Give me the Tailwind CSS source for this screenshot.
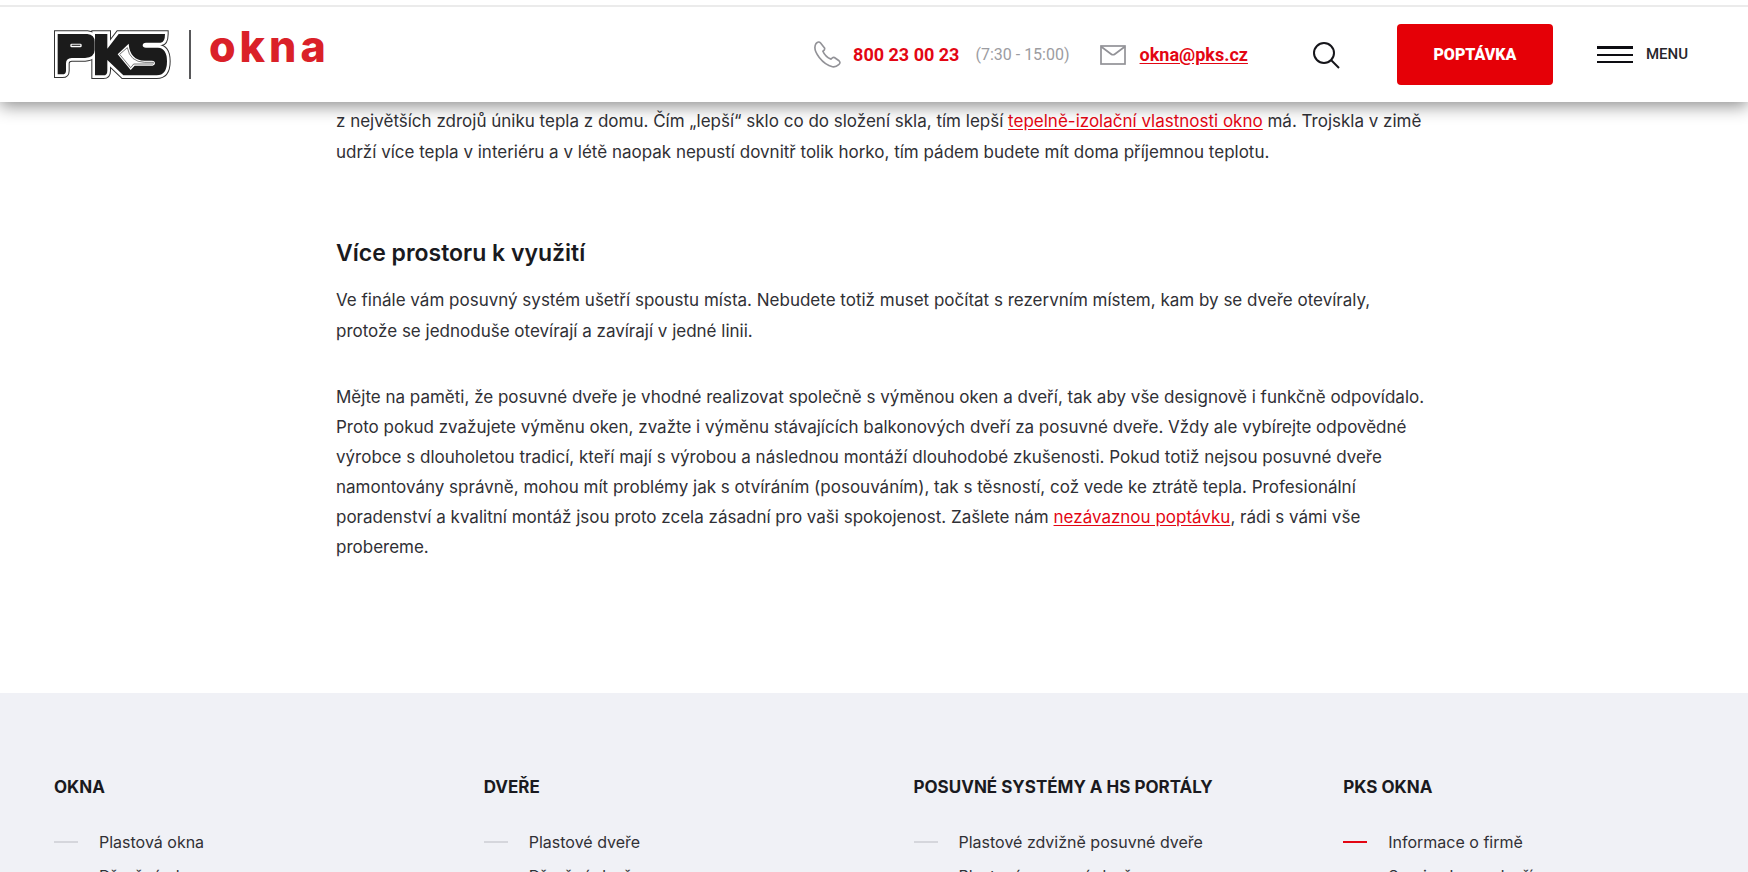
<!DOCTYPE html>
<html lang="cs">
<head>
    <meta charset="UTF-8">
    <meta name="viewport" content="width=device-width, initial-scale=1.0">
    <title>PKS okna</title>
    <script src="https://cdn.jsdelivr.net/npm/@tailwindcss/browser@4"></script>
</head>
<body class="font-['Roboto',sans-serif] bg-white text-[#303035]">
<header class="sticky top-0 z-10 bg-white pt-[5px] shadow-[0_4px_16px_rgba(0,0,0,0.45)]">
    <div class="h-[97px] border-t-2 border-[#ebebeb] flex items-center justify-between pl-[54px] pr-[60px]">
        <!-- Logo -->
        <a href="#" class="flex items-center">
            <svg class="w-[118px] h-[50px]" viewBox="72 90 354 150" role="img" aria-label="PKS">
                <defs>
                    <g id="pks">
                        <path d="M83 102H172Q194 104 194 125V150Q194 172 165 174H125Q108 175 108 190V212Q108 223 97 223H83Z"/>
                        <path d="M195 102H232V146L266 102H405Q405 127 392 128H348Q338 129 338 136Q338 143 348 143H384Q411 145 411 184Q411 226 380 226H280L232 180V212Q232 226 220 226H195Z"/>
                    </g>
                </defs>
                <use href="#pks" fill="none" stroke="#333" stroke-width="22"/>
                <use href="#pks" fill="none" stroke="#fff" stroke-width="16"/>
                <use href="#pks" fill="#1b1b1b"/>
                <rect x="121" y="131" width="34" height="11" rx="4" fill="#fff"/>
                <rect x="125" y="134" width="26" height="4" fill="#444"/>
                <path d="M296 131L263 163L302 210L314 197H368Q375 196 375 190Q375 183 366 182H344Q300 181 296 131Z" fill="#fff"/>
                <path d="M292 143L269 163L302 203L311 192H368Q371 191 370 187H344Q300 186 292 143Z" fill="none" stroke="#333" stroke-width="2"/>
            </svg>
            <span class="ml-[17px] w-[2px] h-[49px] bg-[#58585a]"></span>
            <span class="ml-[18px] mb-[18px] font-['Inter',sans-serif] font-extrabold text-[43px] leading-[50px] tracking-[4px] text-[#da2128]">okna</span>
        </a>

        <!-- Contacts -->
        <div class="flex items-center">
            <svg class="w-[27px] h-[27px]" viewBox="64 124 82 82" fill="none" stroke="#929297" stroke-width="5" stroke-linejoin="round">
                <path d="M70 132Q78 123 84 130L96 145Q98 150 91 155Q98 172 116 179Q121 172 126 174L140 184Q146 190 139 196Q130 204 120 202Q98 197 80 174Q60 148 70 132Z"/>
            </svg>
            <a href="tel:800230023" class="ml-3 text-[18px] font-bold text-[#e30613]">800 23 00 23</a>
            <span class="ml-4 text-[16px] text-[#9c9ca1]">(7:30 - 15:00)</span>
            <svg class="ml-[30px] w-[26px] h-[20px]" viewBox="0 0 26 20" fill="none" stroke="#929297" stroke-width="1.700">
                <rect x="1" y="1" width="24" height="18"/>
                <path d="M1 1.500L11 9Q13 10.500 15 9L25 1.500"/>
            </svg>
            <a href="mailto:okna@pks.cz" class="ml-[14px] text-[18px] font-bold text-[#e30613] underline underline-offset-2">okna@pks.cz</a>
            <button class="ml-16" aria-label="Hledat">
                <svg class="w-[28px] h-[28px]" viewBox="0 0 28 28" fill="none" stroke="#15151a" stroke-width="2">
                    <circle cx="12" cy="12" r="10"/>
                    <path d="M19 19L27 27"/>
                </svg>
            </button>
            <button class="ml-[57px] w-[156px] h-[61px] rounded-[4px] bg-[#e50007] text-white text-[16px] font-black">POPTÁVKA</button>
            <button class="ml-11 flex items-center text-[15px] font-medium text-[#26262b]">
                <svg class="w-9 h-[17px] mr-[13px]" viewBox="0 0 36 17" fill="#0d0d12">
                    <rect width="36" height="3"/>
                    <rect y="8" width="36" height="2"/>
                    <rect y="15" width="36" height="2"/>
                </svg>
                MENU
            </button>
        </div>
    </div>
</header>

<main class="pl-[336px] pr-[318px] pt-1 pb-[131px] font-['Inter',sans-serif] text-[17px]">
    <p class="leading-[31px]">z největších zdrojů úniku tepla z domu. Čím „lepší“ sklo co do složení skla, tím lepší <a href="#" class="text-[#e30613] underline underline-offset-2">tepelně-izolační vlastnosti okno</a> má. Trojskla v zimě udrží více tepla v interiéru a v létě naopak nepustí dovnitř tolik horko, tím pádem budete mít doma příjemnou teplotu.</p>
    <h2 class="mt-[69px] font-semibold text-[23px] leading-[32px] text-[#1a1a20]">Více prostoru k využití</h2>
    <p class="mt-4 leading-[31px]">Ve finále vám posuvný systém ušetří spoustu místa. Nebudete totiž muset počítat s rezervním místem, kam by se dveře otevíraly, protože se jednoduše otevírají a zavírají v jedné linii.</p>
    <p class="mt-[35px] leading-[30px]">Mějte na paměti, že posuvné dveře je vhodné realizovat společně s výměnou oken a dveří, tak aby vše designově i funkčně odpovídalo. Proto pokud zvažujete výměnu oken, zvažte i výměnu stávajících balkonových dveří za posuvné dveře. Vždy ale vybírejte odpovědné výrobce s dlouholetou tradicí, kteří mají s výrobou a následnou montáží dlouhodobé zkušenosti. Pokud totiž nejsou posuvné dveře namontovány správně, mohou mít problémy jak s otvíráním (posouváním), tak s těsností, což vede ke ztrátě tepla. Profesionální poradenství a kvalitní montáž jsou proto zcela zásadní pro vaši spokojenost. Zašlete nám <a href="#" class="text-[#e30613] underline underline-offset-2">nezávaznou poptávku</a>, rádi s vámi vše probereme.</p>
</main>

<footer class="bg-[#f0f1f6] px-[54px] pt-20 pb-20 grid grid-cols-4 gap-x-[79px] font-['Inter',sans-serif] text-[16px] leading-[34px]">
    <div>
        <h3 class="font-bold text-[17px] leading-[28px] text-[#1a1a20] whitespace-nowrap">OKNA</h3>
        <ul class="mt-6">
            <li><a href="#" class="flex items-center"><span class="w-6 h-[2px] mr-[21px] bg-[#d5d6dc]"></span>Plastová okna</a></li>
            <li><a href="#" class="flex items-center"><span class="w-6 h-[2px] mr-[21px] bg-[#d5d6dc]"></span>Dřevěná okna</a></li>
        </ul>
    </div>
    <div>
        <h3 class="font-bold text-[17px] leading-[28px] text-[#1a1a20] whitespace-nowrap">DVEŘE</h3>
        <ul class="mt-6">
            <li><a href="#" class="flex items-center"><span class="w-6 h-[2px] mr-[21px] bg-[#d5d6dc]"></span>Plastové dveře</a></li>
            <li><a href="#" class="flex items-center"><span class="w-6 h-[2px] mr-[21px] bg-[#d5d6dc]"></span>Dřevěné dveře</a></li>
        </ul>
    </div>
    <div>
        <h3 class="font-bold text-[17px] leading-[28px] text-[#1a1a20] whitespace-nowrap">POSUVNÉ SYSTÉMY A HS PORTÁLY</h3>
        <ul class="mt-6">
            <li><a href="#" class="flex items-center"><span class="w-6 h-[2px] mr-[21px] bg-[#d5d6dc]"></span>Plastové zdvižně posuvné dveře</a></li>
            <li><a href="#" class="flex items-center"><span class="w-6 h-[2px] mr-[21px] bg-[#d5d6dc]"></span>Plastové posuvné dveře</a></li>
        </ul>
    </div>
    <div>
        <h3 class="font-bold text-[17px] leading-[28px] text-[#1a1a20] whitespace-nowrap">PKS OKNA</h3>
        <ul class="mt-6">
            <li><a href="#" class="flex items-center"><span class="w-6 h-[2px] mr-[21px] bg-[#e30613]"></span>Informace o firmě</a></li>
            <li><a href="#" class="flex items-center"><span class="w-6 h-[2px] mr-[21px] bg-[#e30613]"></span>Servis oken a dveří</a></li>
        </ul>
    </div>
</footer>
</body>
</html>
